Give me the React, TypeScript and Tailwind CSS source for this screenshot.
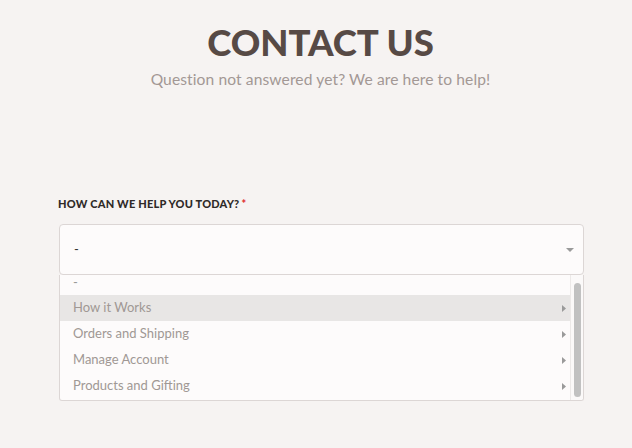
import React from "react";

const items = ["How it Works", "Orders and Shipping", "Manage Account", "Products and Gifting"];

function Tri() {
  return (
    <svg width="4" height="7" viewBox="0 0 4 7" className="shrink-0">
      <path d="M0 0 L4 3.5 L0 7 Z" fill="#9a9a9a" />
    </svg>
  );
}

export default function App() {
  return (
    <div
      className="w-[632px] h-[448px] bg-[#f6f3f2] overflow-hidden"
      style={{ fontFamily: "Lato, 'Noto Sans', sans-serif" }}
    >
      <div className="flex flex-col items-center pt-[21px] pl-[9px]">
        <h1 className="text-[36.5px] leading-[42px] font-black text-[#574a45]">CONTACT US</h1>
        <p className="mt-[6px] text-[15.6px] leading-[20px] text-[#a39895] tracking-[0.1px]">
          Question not answered yet? We are here to help!
        </p>
      </div>
      <div className="mx-[58px] mt-[109px]">
        <div className="text-[11px] leading-[12px] font-black text-[#2f2a28] tracking-[0.2px]">
          HOW CAN WE HELP YOU TODAY?<span className="text-[#e0302f] ml-[2px]">*</span>
        </div>
        <div className="mt-[14px] ml-[1px] w-[525px] h-[51px] rounded-[4px] border border-[#dcd6d5] bg-[#fdfbfb] flex items-center justify-between pl-[14px] pr-[9px]">
          <span className="text-[13px] text-[#333] mt-[1px]">-</span>
          <svg width="8" height="4" viewBox="0 0 8 4">
            <path d="M0 0 L8 0 L4 4 Z" fill="#9a9a9a" />
          </svg>
        </div>
        <div className="ml-[1px] w-[525px] h-[126px] border border-t-0 border-[#dcd6d5] rounded-b-[3px] bg-[#fdfbfb] flex overflow-hidden">
          <div className="flex-1 flex flex-col">
            <div className="h-[20px] pl-[13px] text-[13px] leading-[14px] text-[#999]">-</div>
            {items.map((t, i) => (
              <div
                key={t}
                className={`h-[26px] flex items-center justify-between pl-[13px] pr-[4px] text-[13px] text-[#a09894] ${i === 0 ? "bg-[#e8e6e5]" : ""}`}
              >
                <span>{t}</span>
                <Tri />
              </div>
            ))}
          </div>
          <div className="w-[13px] border-l border-[#ece9e8] bg-[#fbf9f9] flex justify-center pt-[8px] pb-[3px]">
            <div className="w-[7px] h-full rounded-full bg-[#c1c1c1]" />
          </div>
        </div>
      </div>
    </div>
  );
}
